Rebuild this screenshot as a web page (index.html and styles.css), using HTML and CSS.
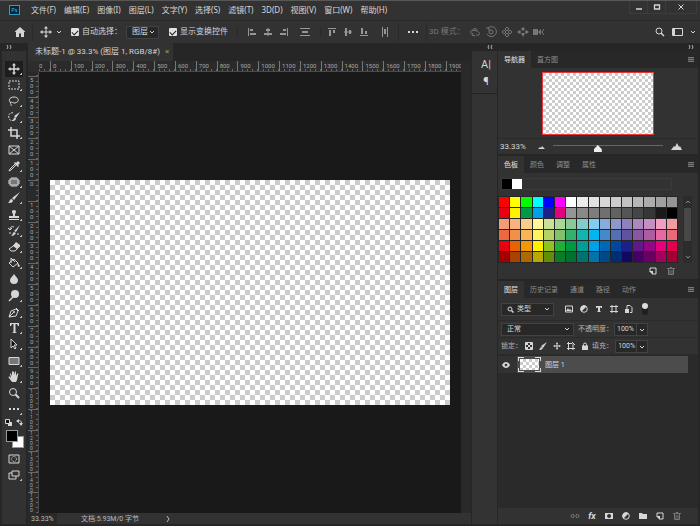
FILE: index.html
```html
<!DOCTYPE html>
<html lang="zh-CN">
<head>
    <meta charset="UTF-8">
    <title>未标题-1</title>
    <link rel="stylesheet" href="styles.css">
</head>
<body>
    <div class="app">
        <header class="menubar">
            <div class="logo">Ps</div>
            <nav class="menus">
                <button>文件(F)</button>
                <button>编辑(E)</button>
                <button>图像(I)</button>
                <button>图层(L)</button>
                <button>文字(Y)</button>
                <button>选择(S)</button>
                <button>滤镜(T)</button>
                <button>3D(D)</button>
                <button>视图(V)</button>
                <button>窗口(W)</button>
                <button>帮助(H)</button>
            </nav>
            <div class="window-buttons">
                <button aria-label="最小化"><svg width="8" height="8"><path d="M1 6h6" stroke-width="1.5"/></svg></button>
                <button aria-label="最大化"><svg width="8" height="8"><path d="M1.5 2h5v4h-5z" stroke-width="1.3"/></svg></button>
                <button aria-label="关闭"><svg width="8" height="8"><path d="M1.5 1.5l5 5m0-5l-5 5"/></svg></button>
            </div>
        </header>

        <div class="options">
            <button class="home" aria-label="主页"><svg width="12" height="12"><path class="f" d="M6 1l5.500 5H10v5H7V7.500H5V11H2V6H.500z"/></svg></button>
            <button class="current-tool" aria-label="移动工具">
                <svg width="12" height="12"><path d="M6 2v8M2 6h8"/><path class="f" d="M6 0l2 2.500H4zM6 12l2-2.500H4zM0 6l2.500-2v4zM12 6L9.500 4v4z"/></svg>
                <svg width="6" height="4"><path d="M1 1l2 2 2-2"/></svg>
            </button>
            <label class="check"><input type="checkbox" checked>自动选择：</label>
            <span class="select auto-select"><select aria-label="自动选择"><option>图层</option></select><svg width="6" height="4"><path d="M1 1l2 2 2-2"/></svg></span>
            <label class="check"><input type="checkbox" checked>显示变换控件</label>
            <div class="icons align">
                <button aria-label="左对齐"><svg width="10" height="10"><path d="M1.500 1v8"/><path class="f" d="M3 2h3v2H3zM3 6h6v2H3z"/></svg></button>
                <button aria-label="水平居中"><svg width="10" height="10"><path d="M5 1v8"/><path class="f" d="M3 2h4v2H3zM1 6h8v2H1z"/></svg></button>
                <button aria-label="右对齐"><svg width="10" height="10"><path d="M8.500 1v8"/><path class="f" d="M4 2h3v2H4zM1 6h6v2H1z"/></svg></button>
            </div>
            <div class="icons distribute">
                <button aria-label="垂直分布"><svg width="12" height="10"><path d="M1 1.500h10M1 8.500h10"/><path class="f" d="M3 4h6v2H3z"/></svg></button>
            </div>
            <div class="icons align">
                <button aria-label="顶对齐"><svg width="10" height="10"><path d="M1 1.500h8"/><path class="f" d="M2 3h2v6H2zM6 3h2v3H6z"/></svg></button>
                <button aria-label="垂直居中"><svg width="10" height="10"><path d="M1 5h8"/><path class="f" d="M2 1h2v8H2zM6 3h2v4H6z"/></svg></button>
                <button aria-label="底对齐"><svg width="10" height="10"><path d="M1 8.500h8"/><path class="f" d="M2 1h2v6H2zM6 4h2v3H6z"/></svg></button>
            </div>
            <div class="icons distribute">
                <button aria-label="水平分布"><svg width="8" height="10"><path d="M1.500 0v10M6.500 0v10"/><path class="f" d="M3 2h2v5H3z"/></svg></button>
            </div>
            <button class="more" aria-label="更多"><svg width="12" height="4"><path class="f" d="M1 1h2v2H1zM5 1h2v2H5zM9 1h2v2H9z"/></svg></button>
            <div class="mode3d">
                <span>3D 模式：</span>
                <button aria-label="环绕"><svg width="12" height="12"><path d="M3 8C-1 5 4 3 8 5s3 5-1 4M4 5c-1-3 4-3 4-1M4 7l-1 2 3 1"/></svg></button>
                <button aria-label="滚动"><svg width="12" height="12"><circle cx="6" cy="6" r="2"/><path d="M3 2a5 5 0 1 1-1 6M1 2h3v3"/></svg></button>
                <button aria-label="平移"><svg width="12" height="12"><path d="M6 1l2 2-2 2-2-2zM6 7l2 2-2 2-2-2zM3 4l2 2-2 2-2-2zM9 4l2 2-2 2-2-2z"/></svg></button>
                <button aria-label="滑动"><svg width="12" height="12"><path class="f" d="M6 1l2 2-2 2-2-2zM4 7h4L6 11zM0 6l3-2 1 2-1 2zM12 6L9 4 8 6l1 2z"/></svg></button>
                <button aria-label="变焦"><svg width="12" height="12"><path class="f" d="M0 3h5v6H0zM5 6l3-3v6z"/><path d="M11 3L9 6l2 3"/></svg></button>
            </div>
            <div class="workspace">
                <button aria-label="搜索"><svg width="10" height="10"><circle cx="4" cy="4" r="3"/><path d="M6 6l3 3" stroke-width="1.500"/></svg></button>
                <button aria-label="工作区"><svg width="11" height="10"><path d="M.500 1.500h10v7H.500z"/><path class="f" d="M1 2h2v6H1z"/></svg></button>
                <button aria-label="工作区列表"><svg width="6" height="4"><path d="M1 1l2 2 2-2"/></svg></button>
            </div>
        </div>

        <div class="main">
            <aside class="tools">
                <div class="dock-head"><svg width="6" height="4"><path d="M1 0l1 2-1 2M4 0l1 2-1 2"/></svg></div>
                <div class="tool-list">
                    <div class="tool-group">
                        <button class="tool active" aria-label="移动"><svg width="12" height="12"><path d="M6 2v8M2 6h8" stroke-width="1.500"/><path class="f" d="M6 0l2 2.500H4zM6 12l2-2.500H4zM0 6l2.500-2v4zM12 6L9.500 4v4z"/></svg></button>
                        <button class="tool" aria-label="选框"><svg width="12" height="12"><path d="M1 2h10v8H1z" stroke-dasharray="2 1"/></svg></button>
                        <button class="tool" aria-label="套索"><svg width="12" height="12"><path d="M3 8C0 6 1 2 6 2s6 5 1 6c-2 0-3-1-4-1-2 1 1 2 0 4"/></svg></button>
                        <button class="tool" aria-label="快速选择"><svg width="12" height="12"><path d="M5 2C2 1 0 4 1 7s3 3 5 2" stroke-dasharray="2 1"/><path class="f" d="M12 1L8 7 6 5zM7 6l1 2c-1 2-3 2-4 2 2-1 1-3 3-4z"/></svg></button>
                        <button class="tool" aria-label="裁剪"><svg width="12" height="12"><path d="M3 0v9h9M0 3h9v9" stroke-width="1.500"/></svg></button>
                    </div>
                    <div class="tool-group">
                        <button class="tool plain" aria-label="图框"><svg width="12" height="12"><path d="M1 2h10v8H1zM1 2l10 8M11 2L1 10"/></svg></button>
                        <button class="tool" aria-label="吸管"><svg width="12" height="12"><path d="M7 4L2 9l-1 2 2-1 5-5"/><path class="f" d="M6 3l1-1 1 1 2-2 2 2-2 2 1 1-1 1z"/></svg></button>
                        <button class="tool" aria-label="修复"><svg width="12" height="12"><rect x="2" y="3" width="8" height="6" fill="#777"/><path d="M4 1v2M6 1v2M8 1v2M4 9v2M6 9v2M8 9v2M0 5h2M0 7h2M10 5h2M10 7h2"/></svg></button>
                        <button class="tool" aria-label="画笔"><svg width="12" height="12"><path class="f" d="M12 0L6 8 4 6zM4 7l1 2c-1 2-3 2-5 2 2-1 1-4 4-4z"/></svg></button>
                    </div>
                    <div class="tool-group">
                        <button class="tool" aria-label="图章"><svg width="12" height="12"><path class="f" d="M6 1c3 0 2 3 1 4v2h4v2H1V7h4V5C4 4 3 1 6 1zM1 10h10v1H1z"/></svg></button>
                        <button class="tool" aria-label="历史画笔"><svg width="12" height="12"><path class="f" d="M12 0L8 7 6 6zM6 7l2 1c-2 3-4 3-5 3 2-1 1-3 3-4z"/><path d="M6 2C4 1 2 2 2 4M0 3l2 2 2-2M1 8h2M9 9h2"/></svg></button>
                        <button class="tool" aria-label="橡皮擦"><svg width="12" height="12"><path d="M4 6l4-4 4 3-5 5H3L1 8z"/><path class="f" d="M5 5l3-4 4 3-3 4z"/></svg></button>
                        <button class="tool" aria-label="油漆桶"><svg width="12" height="12"><path d="M6 2l4 4-5 4-4-4zM3 6V1l4 4"/><path class="f" d="M10 6c2 2 2 4 1 4s-2-1-1-4z"/></svg></button>
                        <button class="tool plain" aria-label="模糊"><svg width="12" height="12"><path class="f" d="M6 1c2 3 4 4 4 6a4 4 0 0 1-8 0c0-2 2-3 4-6z"/></svg></button>
                    </div>
                    <div class="tool-group">
                        <button class="tool" aria-label="减淡"><svg width="12" height="12"><circle class="f" cx="7" cy="4" r="4"/><path d="M5 7l-4 4" stroke-width="1.500"/></svg></button>
                        <button class="tool" aria-label="钢笔"><svg width="12" height="12"><path d="M1 11l2-6 5-2 2 2-2 5zM1 11l5-5M8 2l3 3"/><circle class="f" cx="6" cy="6" r="1"/></svg></button>
                        <button class="tool" aria-label="文字"><svg width="12" height="12"><path class="f" d="M2 1h9v3h-1L9 2H7.500v8l1.500 1H4l1.500-1V2H4L3 4H2z"/></svg></button>
                        <button class="tool" aria-label="路径选择"><svg width="12" height="12"><path d="M3 1v9l2-2 2 3 1-1-2-3h3z" fill="#111"/></svg></button>
                    </div>
                    <div class="tool-group">
                        <button class="tool" aria-label="矩形"><svg width="12" height="12"><path d="M1 2.500h10v7H1z" fill="#777"/></svg></button>
                        <button class="tool" aria-label="抓手"><svg width="12" height="12"><path class="f" d="M4 11L1 7c-1-1 0-2 1-1l1 1-1-4c0-1 1-1 1 0l1 2V1c0-1 1-1 2 0v3l1-3c0-1 1-1 1 0v4l1-2c1-1 2 0 1 1l-1 5-1 2z"/></svg></button>
                        <button class="tool plain" aria-label="缩放"><svg width="12" height="12"><circle cx="5" cy="5" r="3.500"/><path d="M7.500 7.500L11 11" stroke-width="2"/></svg></button>
                        <button class="tool" aria-label="编辑工具栏"><svg width="12" height="12"><path class="f" d="M1 5h2v2H1zM5 5h2v2H5zM9 5h2v2H9z"/></svg></button>
                    </div>
                </div>
                <div class="color-reset">
                    <button aria-label="默认颜色"><svg width="7" height="7"><path class="f" d="M3 3h4v4H3z"/><path d="M.500.500h4v4h-4z" fill="#111"/></svg></button>
                    <button aria-label="切换颜色"><svg width="7" height="7"><path d="M2 2c3-1 4 1 3 4"/><path class="f" d="M0 2l3-2v4zM5 7L3 4h4z"/></svg></button>
                </div>
                <div class="color-chips">
                    <button class="chip back" aria-label="背景色"></button>
                    <button class="chip front" aria-label="前景色"></button>
                </div>
                <div class="modes">
                    <button class="tool plain" aria-label="快速蒙版"><svg width="12" height="12"><path d="M1 2h10v8H1z"/><circle cx="6" cy="6" r="2.500" stroke-dasharray="1 1"/></svg></button>
                    <button class="tool" aria-label="屏幕模式"><svg width="12" height="12"><path d="M4 2h7v5H4zM4 4H1v6h7V7"/></svg></button>
                </div>
            </aside>

            <main class="document">
                <div class="doc-tabs">
                    <div class="doc-tab"><span>未标题-1 @ 33.3% (图层 1, RGB/8#)</span><button aria-label="关闭文档">×</button></div>
                </div>
                <div class="stage">
                    <div class="corner"></div>
                    <div class="ruler ruler-h"><div class="strip" id="rulerH"></div></div>
                    <div class="ruler ruler-v"><div class="strip" id="rulerV"></div></div>
                    <div class="viewport"><div class="artboard"></div></div>
                    <div class="scroll-gutter"></div>
                </div>
                <footer class="status">
                    <input type="text" value="33.33%" aria-label="缩放比例">
                    <span>文档:5.93M/0 字节</span>
                    <button aria-label="状态选项"><svg width="4" height="8"><path d="M1 1l2 3-2 3"/></svg></button>
                </footer>
            </main>

            <aside class="icon-dock">
                <div class="dock-head"><svg width="6" height="4"><path d="M2 0L1 2l1 2M5 0L4 2l1 2"/></svg></div>
                <div class="dock-items">
                    <button aria-label="字符">A|</button>
                    <button aria-label="段落">¶</button>
                </div>
            </aside>

            <aside class="panels">
                <div class="dock-head"><svg width="6" height="4"><path d="M1 0l1 2-1 2M4 0l1 2-1 2"/></svg></div>

                <section class="panel">
                    <div class="tabs">
                        <button class="on">导航器</button>
                        <button>直方图</button>
                        <button class="panel-menu" aria-label="面板菜单"></button>
                    </div>
                    <div class="navigator">
                        <div class="preview"></div>
                    </div>
                    <div class="zoom-row">
                        <input type="text" value="33.33%" aria-label="导航器缩放">
                        <svg width="7" height="6"><path class="f" d="M0 5l2-2 1 1 1-2 3 3z"/></svg>
                        <input type="range" min="0" max="100" value="40" aria-label="缩放">
                        <svg width="11" height="8"><path class="f" d="M0 7l3-4 1 1 2-4 2 4 1-1 2 4z"/></svg>
                    </div>
                </section>

                <section class="panel">
                    <div class="tabs">
                        <button class="on">色板</button>
                        <button>颜色</button>
                        <button>调整</button>
                        <button>属性</button>
                        <button class="panel-menu" aria-label="面板菜单"></button>
                    </div>
                    <div class="recent"><i class="black"></i><i class="white"></i></div>
                    <div class="swatch-area">
                        <div class="swatches" id="swatches"></div>
                        <div class="scrollbar">
                            <svg width="6" height="4"><path d="M1 3l2-2 2 2"/></svg>
                            <div class="scroll-thumb"></div>
                            <svg width="6" height="4"><path d="M1 1l2 2 2-2"/></svg>
                        </div>
                    </div>
                    <div class="swatch-actions">
                        <button aria-label="新建色板"><svg width="8" height="8"><path d="M1 1h6v6H4L1 4z"/><path class="f" d="M0 4h4v4z"/></svg></button>
                        <button class="dim" aria-label="删除色板"><svg width="8" height="8"><path d="M0 1.500h8M3 .500h2M1.500 2v5.500h5V2M3 3v4M5 3v4"/></svg></button>
                    </div>
                </section>

                <section class="panel layers">
                    <div class="tabs">
                        <button class="on">图层</button>
                        <button>历史记录</button>
                        <button>通道</button>
                        <button>路径</button>
                        <button>动作</button>
                        <button class="panel-menu" aria-label="面板菜单"></button>
                    </div>
                    <div class="row filter-row">
                        <span class="select kind"><svg width="7" height="7"><circle cx="3" cy="3" r="2"/><path d="M4.500 4.500l2 2" stroke-width="1.500"/></svg><select aria-label="筛选类型"><option>类型</option></select><svg width="6" height="4"><path d="M1 1l2 2 2-2"/></svg></span>
                        <div class="icons filters">
                            <button aria-label="像素"><svg width="8" height="8"><path d="M.500 1h7v6h-7z"/><path class="f" d="M1 6l2-3 1 2 1-1 2 2z"/></svg></button>
                            <button aria-label="调整"><svg width="8" height="8"><circle cx="4" cy="4" r="3.300"/><path class="f" d="M6.500 1.500A3.500 3.500 0 1 0 1.500 6.500z"/></svg></button>
                            <button aria-label="文字"><svg width="8" height="8"><path class="f" d="M1 1h6v2H6L5 2v4l1 1H2l1-1V2L2 3H1z"/></svg></button>
                            <button aria-label="形状"><svg width="8" height="8"><path d="M2 0v8M6 0v8M0 1.500h8M0 6.500h8"/></svg></button>
                            <button aria-label="智能对象"><svg width="8" height="8"><path d="M2 4V.500h3l2 2v5H5"/><path class="f" d="M0 4h4v4H0z"/></svg></button>
                        </div>
                        <button class="toggle" aria-label="打开筛选"></button>
                    </div>
                    <div class="row">
                        <span class="select blend"><select aria-label="混合模式"><option>正常</option></select><svg width="6" height="4"><path d="M1 1l2 2 2-2"/></svg></span>
                        <label for="opacity">不透明度：</label>
                        <span class="select percent"><input type="text" id="opacity" value="100%"><svg width="6" height="4"><path d="M1 1l2 2 2-2"/></svg></span>
                    </div>
                    <div class="row lock-row">
                        <span class="lock-label">锁定：</span>
                        <div class="icons locks">
                            <button aria-label="锁定透明"><svg width="8" height="8"><path d="M.500.500h7v7h-7z"/><path class="f" d="M1 1h2v2H1zM5 1h2v2H5zM3 3h2v2H3zM1 5h2v2H1zM5 5h2v2H5z"/></svg></button>
                            <button aria-label="锁定图像"><svg width="8" height="8"><path class="f" d="M8 0L4 6 2 4zM2 5l2 1c-1 2-3 2-4 2 1-1 1-2 2-3z"/></svg></button>
                            <button aria-label="锁定位置"><svg width="8" height="8"><path d="M4 1v6M1 4h6"/><path class="f" d="M4 0l1 2H3zM4 8l1-2H3zM0 4l2-1v2zM8 4L6 3v2z"/></svg></button>
                            <button aria-label="锁定画板"><svg width="8" height="8"><path d="M1.500 0v8M0 1.500h5l1 1v5.500M0 6.500h8M5 0l3 3"/></svg></button>
                            <button aria-label="锁定全部"><svg width="8" height="8"><path d="M2.500 4V2.500a1.500 1.500 0 0 1 3 0V4"/><path class="f" d="M1 3.500h6V8H1z"/></svg></button>
                        </div>
                        <label for="fill">填充：</label>
                        <span class="select percent"><input type="text" id="fill" value="100%"><svg width="6" height="4"><path d="M1 1l2 2 2-2"/></svg></span>
                    </div>
                    <div class="layer-list">
                        <div class="layer">
                            <button aria-label="可见性"><svg width="8" height="6"><path class="f" d="M0 3c2-4 6-4 8 0-2 4-6 4-8 0z"/><circle cx="4" cy="3" r="1.300" fill="#333" stroke="none"/></svg></button>
                            <div class="layer-thumb"></div>
                            <span>图层 1</span>
                        </div>
                    </div>
                    <div class="layer-actions">
                        <button class="dim" aria-label="链接"><svg width="10" height="8"><path d="M4 2.500H2.500a1.500 1.500 0 0 0 0 3H4M6 2.500h1.500a1.500 1.500 0 0 1 0 3H6M3 4h4"/></svg></button>
                        <button class="fx" aria-label="图层样式">fx</button>
                        <button aria-label="蒙版"><svg width="8" height="8"><path class="f" fill-rule="evenodd" d="M0 1h8v6H0zM4 2a2 2 0 1 0 .1 0z"/></svg></button>
                        <button aria-label="调整图层"><svg width="8" height="8"><circle cx="4" cy="4" r="3.300"/><path class="f" d="M6.500 1.500A3.500 3.500 0 1 0 1.500 6.500z"/></svg></button>
                        <button aria-label="新建组"><svg width="8" height="8"><path class="f" d="M0 1h3l1 1h4v5H0z"/></svg></button>
                        <button aria-label="新建图层"><svg width="8" height="8"><path d="M1 1h6v6H4L1 4z"/><path class="f" d="M0 4h4v4z"/></svg></button>
                        <button class="dim" aria-label="删除图层"><svg width="8" height="8"><path d="M0 1.500h8M3 .500h2M1.500 2v5.500h5V2M3 3v4M5 3v4"/></svg></button>
                    </div>
                </section>
            </aside>
        </div>
    </div>

    <script src="app.js"></script>
</body>
</html>
```

FILE: styles.css
```css
:root {
    --step: calc(400px / 19.2); /* 100 document pixels */
    --bar: #323232;
    --dark: #262626;
    --text: #d6d6d6;
}

* {
    box-sizing: border-box;
}

body {
    margin: 0;
    background: var(--dark);
    color: var(--text);
    font-family: Roboto, "Noto Sans CJK SC", sans-serif;
    font-size: 7px;
    line-height: 10px;
}

button, input, select {
    margin: 0;
    padding: 0;
    border: 0;
    background: none;
    color: inherit;
    font: inherit;
}

button {
    display: flex;
    align-items: center;
    justify-content: center;
}

svg {
    display: block;
    flex: none;
    fill: none;
    stroke: currentColor;
}

svg .f {
    fill: currentColor;
    stroke: none;
}

.app {
    display: flex;
    flex-direction: column;
    height: 100vh;
    padding: 0 2px 2px;
    border-top: 1px solid #575757;
    overflow: hidden;
}

/* menu bar */
.menubar {
    display: flex;
    align-items: center;
    height: 20px;
    margin: 0 -2px;
    padding: 0 0 2px 9px;
    background: var(--bar);
    border-bottom: 1px solid #282828;
    font-family: "Noto Sans", "Noto Sans CJK SC", sans-serif;
    font-size: 8px;
}

.logo {
    width: 11px;
    height: 10px;
    border: 1px solid #2a9ecb;
    background: #062536;
    color: #35b4e6;
    font-size: 6px;
    line-height: 8px;
    text-align: center;
}

.menus {
    display: flex;
    gap: 8px;
    margin-left: 11px;
}

.window-buttons {
    display: flex;
    align-self: flex-start;
    margin-left: auto;
    margin-right: 3px;
    border: 1px solid #3c3c3c;
    border-top: 0;
}

.window-buttons button {
    width: 18px;
    height: 12px;
    border-right: 1px solid #3c3c3c;
}

.window-buttons button:last-child {
    width: 30px;
    border-right: 0;
}

/* options bar */
.options {
    display: flex;
    align-items: center;
    height: 22px;
    margin: 0 -2px;
    padding: 0 4px 0 14px;
    background: var(--bar);
    font-size: 8px;
}

.current-tool {
    gap: 4px;
    height: 18px;
    margin-left: 6px;
    padding: 0 9px 0 7px;
    border-left: 1px solid #292929;
}

.check {
    display: flex;
    align-items: center;
    gap: 3px;
}

.check input {
    display: flex;
    align-items: center;
    justify-content: center;
    width: 8px;
    height: 8px;
    border-radius: 1px;
    background: #e2e2e2;
    appearance: none;
}

.check input:checked::before {
    content: "";
    width: 5px;
    height: 3px;
    border: solid #222;
    border-width: 0 0 1px 1px;
    transform: rotate(-45deg);
}

.select {
    display: flex;
    align-items: center;
    height: 13px;
    padding: 0 3px 0 5px;
    border: 1px solid #424242;
    background: #282828;
}

.select select, .select input {
    flex: 1;
    width: 0;
    appearance: none;
    outline: none;
}

.auto-select {
    width: 33px;
    margin: 0 10px 0 4px;
}

.icons {
    display: flex;
}

.options .icons {
    color: #969696;
}

.align button {
    width: 16px;
}

.align {
    margin-left: 9px;
    padding-left: 6px;
    border-left: 1px solid #292929;
}

.distribute button {
    width: 26px;
}

.distribute + .align {
    margin-left: 2px;
    padding-left: 3px;
}

.more {
    width: 29px;
    height: 18px;
    border-left: 1px solid #292929;
    border-right: 1px solid #292929;
}

.mode3d {
    display: flex;
    align-items: center;
    gap: 4px;
    margin-left: 2px;
    color: #777;
}

.mode3d span {
    width: 36px;
    white-space: nowrap;
}

.workspace {
    display: flex;
    align-items: center;
    gap: 7px;
    margin-left: auto;
}

/* work area */
.main {
    display: flex;
    flex: 1;
    min-height: 0;
}

.dock-head {
    display: flex;
    align-items: center;
    flex: none;
    height: 8px;
    padding: 0 4px;
    color: #b0b0b0;
}

.tools {
    display: flex;
    flex-direction: column;
    width: 24px;
}

.tool-list {
    display: flex;
    flex-direction: column;
    gap: 1px;
    padding-top: 10px;
    background: var(--bar);
}

.tool {
    width: 18px;
    height: 16px;
    margin: 0 auto;
    background: linear-gradient(135deg, transparent 50%, #bbb 50%) right 1px bottom 2px / 2px 2px no-repeat;
}

.tool.plain {
    background: none;
}

.tool.active {
    background-color: #1e1e1e;
}

.color-reset {
    display: flex;
    justify-content: space-between;
    padding: 2px 3px 4px;
    background: var(--bar);
}

.color-chips {
    display: grid;
    grid-template-columns: 6px 6px 6px;
    grid-template-rows: 6px 6px 6px;
    padding-left: 4px;
    background: var(--bar);
}

.chip {
    border: 1px solid #999;
}

.chip.front {
    grid-area: 1 / 1 / 3 / 3;
    background: #000;
}

.chip.back {
    grid-area: 2 / 2 / 4 / 4;
    background: #fff;
}

.modes {
    flex: 1;
    padding-top: 3px;
    background: var(--bar);
}

.document {
    display: flex;
    flex-direction: column;
    flex: 1;
    min-width: 0;
    margin-left: 2px;
}

.doc-tabs {
    display: flex;
    height: 18px;
}

.doc-tab {
    display: flex;
    align-items: center;
    gap: 5px;
    padding: 0 4px 0 7px;
    background: var(--bar);
    font-size: 8px;
}

.doc-tab button {
    color: #999;
}

.stage {
    display: grid;
    grid-template-columns: 11px 1fr 10px;
    grid-template-rows: 11px 1fr;
    flex: 1;
    min-height: 0;
}

.corner {
    background: #2d2d2d;
}

.ruler {
    display: flex;
    min-width: 0;
    min-height: 0;
    overflow: hidden;
    background: #2a2a2a;
    color: #a8a8a8;
    font-size: 6px;
}

.strip {
    display: flex;
    flex: none;
}

.strip span {
    flex: none;
}

.ruler-h {
    justify-content: center;
    border-bottom: 1px solid #4a4a4a;
}

.ruler-h .strip {
    width: calc(var(--step) * 21.2);
}

.ruler-h span {
    width: var(--step);
    padding-left: 2px;
    border-left: 1px solid #777;
    background: repeating-linear-gradient(90deg, transparent 0 4px, #666 4px 5px) bottom / 100% 2px no-repeat;
}

.ruler-v {
    grid-row: 2;
    align-items: center;
    border-right: 1px solid #4a4a4a;
}

.ruler-v .strip {
    flex-direction: column;
    width: 100%;
    height: calc(var(--step) * 22.8);
}

.ruler-v span {
    display: flex;
    flex-direction: column;
    height: var(--step);
    padding-left: 2px;
    border-top: 1px solid #666;
    background: repeating-linear-gradient(transparent 0 4px, #666 4px 5px) right / 2px 100% no-repeat;
}

.ruler-v b {
    height: 6px;
    font-weight: normal;
    line-height: 6px;
}

/* four digits have to share one step */
.ruler-v .long b {
    height: 5px;
    font-size: 5px;
    line-height: 5px;
}

.viewport {
    display: grid;
    place-items: center;
    min-height: 0;
    background: #191919;
}

.artboard {
    width: 400px;
    height: 225px;
    background: repeating-conic-gradient(#ccc 0 25%, #fff 0 50%) 0 0 / 10px 10px;
}

.scroll-gutter {
    grid-area: 1 / 3 / 3 / 4;
    background: #292929;
}

.status {
    display: flex;
    align-items: center;
    height: 11px;
    background: var(--bar);
    color: #bbb;
}

.status input {
    width: 29px;
    height: 11px;
    padding-left: 3px;
    background: #292929;
}

.status span {
    width: 85px;
    margin-left: 24px;
}

.icon-dock {
    display: flex;
    flex-direction: column;
    width: 25px;
    margin: 0 1px;
}

.icon-dock .dock-head {
    justify-content: flex-end;
}

.dock-items {
    flex: 1;
    padding-top: 5px;
    background: linear-gradient(#222, #222) 0 42px / 100% 1px no-repeat, #333;
}

.dock-items button {
    width: 100%;
    height: 17px;
    padding-left: 3px;
    font-size: 11px;
}

/* panels */
.panels {
    display: flex;
    flex-direction: column;
    flex: none;
    width: 200px;
}

.panels .dock-head {
    justify-content: flex-end;
}

.panel {
    margin-bottom: 2px;
    background: var(--bar);
}

.tabs {
    display: flex;
    height: 17px;
    background: #282828;
    color: #8e8e8e;
}

.tabs button {
    padding: 0 6px;
}

.tabs .on {
    background: var(--bar);
    color: #e4e4e4;
}

.tabs .panel-menu {
    width: 6px;
    height: 5px;
    margin: 6px 4px 0 auto;
    padding: 0;
    background: repeating-linear-gradient(#777 0 1px, #444 1px 2px);
}

.navigator {
    display: flex;
    justify-content: center;
    padding: 4px 0 3px;
}

.preview {
    width: 112px;
    height: 63px;
    border: 1px solid #e8383d;
    background: repeating-conic-gradient(#fff 0 25%, #ccc 0 50%) 0 0 / 6px 6px;
}

.zoom-row {
    display: flex;
    align-items: center;
    height: 16px;
    padding: 0 16px 0 2px;
    border-top: 1px solid #2a2a2a;
}

.zoom-row input[type="text"] {
    width: 36px;
    margin-right: 2px;
    font-size: 8px;
}

.zoom-row input[type="range"] {
    flex: 1;
    min-width: 0;
    height: 10px;
    margin: 0 8px;
    background: linear-gradient(#666, #666) 0 3px / 100% 1px no-repeat;
    appearance: none;
}

.zoom-row input[type="range"]::-webkit-slider-thumb {
    width: 8px;
    height: 7px;
    margin-top: 4px;
    background: #eee;
    clip-path: polygon(50% 0, 100% 60%, 100% 100%, 0 100%, 0 60%);
    appearance: none;
}

.recent {
    display: flex;
    height: 12px;
    margin: 5px 26px 6px 3px;
    border: 1px solid #3a3a3a;
}

.recent i {
    width: 10px;
    height: 10px;
}

.recent .black {
    background: #000;
}

.recent .white {
    background: #fff;
}

.swatch-area {
    display: flex;
    gap: 5px;
    padding-right: 6px;
}

.swatches {
    display: grid;
    grid-template-columns: repeat(16, 1fr);
    grid-auto-rows: 10px;
    gap: 1px;
    flex: 1;
    padding: 1px;
    background: #262626;
}

.scrollbar {
    display: flex;
    flex-direction: column;
    align-items: center;
    gap: 4px;
    width: 9px;
    padding: 4px 0;
    background: #2c2c2c;
    color: #888;
}

.scroll-thumb {
    width: 7px;
    height: 33px;
    margin-bottom: auto;
    background: #484848;
}

.swatch-actions {
    display: flex;
    justify-content: flex-end;
    gap: 10px;
    padding: 4px 23px 4px 0;
}

.dim {
    color: #777;
}

.layers {
    display: flex;
    flex-direction: column;
    flex: 1;
    min-height: 0;
    margin-bottom: 0;
}

.row {
    display: flex;
    align-items: center;
    height: 17px;
    padding-left: 3px;
    border-bottom: 1px solid #2b2b2b;
}

.filter-row {
    height: 23px;
}

.kind {
    gap: 3px;
    width: 53px;
}

.filters {
    margin-left: 7px;
}

.filters button {
    width: 15px;
}

.toggle {
    align-items: flex-start;
    width: 6px;
    height: 12px;
    margin-left: 6px;
    border-radius: 3px;
    background: #1f1f1f;
}

.toggle::before {
    content: "";
    width: 6px;
    height: 6px;
    border-radius: 50%;
    background: #ddd;
}

.blend {
    width: 73px;
    margin-right: 4px;
}

.row label, .lock-label {
    color: #b4b4b4;
}

.row label {
    width: 36px;
}

.percent {
    width: 34px;
    padding: 0 2px;
}

.percent svg {
    box-sizing: content-box;
    padding: 4px 0 3px 2px;
    border-left: 1px solid #424242;
}

.lock-label {
    width: 22px;
}

.locks button {
    width: 14px;
}

.lock-row label {
    width: 24px;
    margin-left: auto;
}

.lock-row .percent {
    margin-right: 50px;
}

.layer-list {
    flex: 1;
    padding-top: 1px;
    background: #2a2a2a;
}

.layer {
    display: flex;
    align-items: center;
    gap: 4px;
    height: 17px;
    margin-right: 10px;
    background: linear-gradient(90deg, #323232 19px, #4c4c4c 19px);
}

.layer button {
    width: 16px;
}

/* checkerboard framed by four corner brackets */
.layer-thumb {
    width: 23px;
    height: 15px;
    padding: 2px;
    background:
        repeating-conic-gradient(#ccc 0 25%, #fff 0 50%) 0 0 / 6px 6px content-box content-box,
        linear-gradient(90deg, #ddd 6px, transparent 6px 17px, #ddd 17px) top / 100% 1px no-repeat,
        linear-gradient(90deg, #ddd 6px, transparent 6px 17px, #ddd 17px) bottom / 100% 1px no-repeat,
        linear-gradient(#ddd 4px, transparent 4px 11px, #ddd 11px) left / 1px 100% no-repeat,
        linear-gradient(#ddd 4px, transparent 4px 11px, #ddd 11px) right / 1px 100% no-repeat;
}

.layer-actions {
    display: flex;
    justify-content: flex-end;
    gap: 1px;
    height: 16px;
    padding-right: 13px;
}

.layer-actions button {
    width: 16px;
}

.layer-actions .fx {
    font-size: 9px;
    font-style: italic;
    font-weight: bold;
}
```

FILE: app.js
```js
// rulers: one cell for every 100 document pixels
function fillRuler(id, from, to, stacked) {
    const strip = document.getElementById(id);
    for (let n = from; n <= to; n += 100) {
        const cell = document.createElement('span');
        const label = String(Math.abs(n));
        if (stacked) {
            if (label.length > 3) cell.className = 'long';
            for (const digit of label) {
                const b = document.createElement('b');
                b.textContent = digit;
                cell.appendChild(b);
            }
        } else {
            cell.textContent = label;
        }
        strip.appendChild(cell);
    }
}

fillRuler('rulerH', -100, 1900, false);
fillRuler('rulerV', -500, 1500, true);
document.getElementById('rulerV').prepend(document.createElement('span'));

const colors = [
    'ff0000 ffff00 00ff00 00ffff 0000ff ff00ff ffffff ebebeb e1e1e1 d7d7d7 cccccc c2c2c2 b7b7b7 acacac a0a0a0 959595',
    'e60012 fff100 009944 00a0e9 1d2088 e4007f 959595 898989 7d7d7d 707070 626262 555555 464646 363636 1a1a1a 000000',
    'f29b76 f6b37f facd89 fff799 cce198 acd598 89c997 84ccc9 7ecef4 88abda 8c97cb 8f82bc aa89bd c490bf f19ec2 f29c9f',
    'eb6841 f19149 f8b551 fff45c b3d465 80c269 32b16c 13b5b1 00b7ee 448aca 556fb5 5f52a0 8957a1 ae5da1 ea68a2 eb6877',
    'e60012 eb6100 f39800 fff100 8fc31f 22ac38 009944 009e96 00a0e9 0068b7 00479d 1d2088 601986 920783 e4007f e5004f',
    'a40000 a84200 ac6a00 b7aa00 638c0b 097c25 007130 00736d 0075a9 004986 002e73 100964 440062 6a005f a4005d a40035'
];

const swatches = document.getElementById('swatches');
for (const color of colors.join(' ').split(' ')) {
    const cell = document.createElement('div');
    cell.style.background = '#' + color;
    swatches.appendChild(cell);
}
```
